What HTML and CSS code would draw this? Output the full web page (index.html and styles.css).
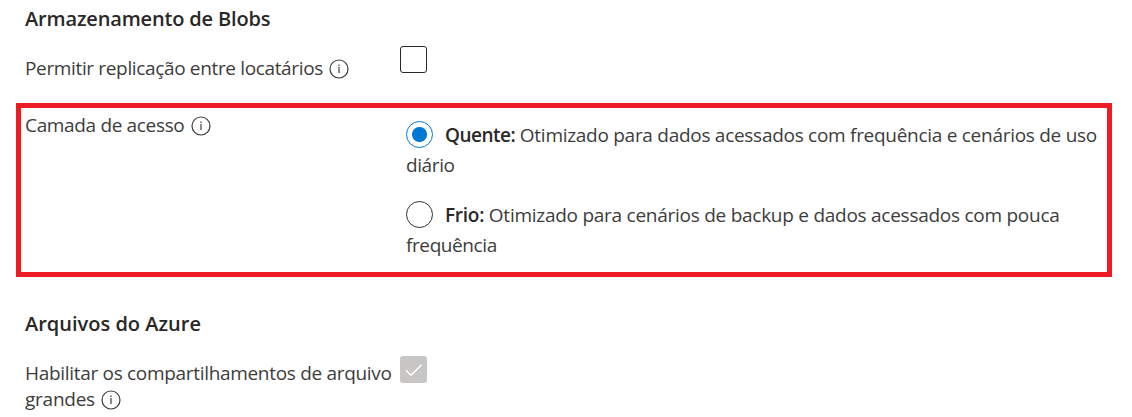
FILE: index.html
```
<!DOCTYPE html>
<html lang="pt-BR">
<head>
<meta charset="utf-8">
<title>Armazenamento</title>
<link rel="stylesheet" href="styles.css">
</head>
<body>
<main class="form">
  <h2 class="title title-blobs">Armazenamento de Blobs</h2>
  <div class="row row-replication">
    <div class="label"><span class="t-replication">Permitir replicação entre locatários</span> <svg class="info" viewBox="0 0 20 20"><circle cx="10" cy="10" r="9"/><path d="M10 8v6M10 5.400v1.500"/></svg></div>
    <span class="checkbox"></span>
  </div>
  <section class="highlight">
    <div class="label"><span class="t-tier">Camada de acesso</span> <svg class="info" viewBox="0 0 20 20"><circle cx="10" cy="10" r="9"/><path d="M10 8v6M10 5.400v1.500"/></svg></div>
    <div class="options">
      <div class="option"><span class="radio checked"></span><b class="t-hot">Quente:</b><span class="t-hot-text"> Otimizado para dados acessados com frequência e cenários de uso</span><br><span class="t-wrap">diário</span></div>
      <div class="option"><span class="radio"></span><b class="t-cool">Frio:</b><span class="t-cool-text"> Otimizado para cenários de backup e dados acessados com pouca</span><br><span class="t-wrap">frequência</span></div>
    </div>
  </section>
  <h2 class="title title-files">Arquivos do Azure</h2>
  <div class="row row-shares">
    <div class="label"><span class="t-shares">Habilitar os compartilhamentos de arquivo</span><br><span class="t-large">grandes</span> <svg class="info" viewBox="0 0 20 20"><circle cx="10" cy="10" r="9"/><path d="M10 8v6M10 5.400v1.500"/></svg></div>
    <span class="checkbox disabled"><svg viewBox="0 0 27 27"><path d="M6 14.200l5 5L21.500 8.700"/></svg></span>
  </div>
</main>
</body>
</html>
```
FILE: styles.css
```
* { box-sizing: border-box; }
body { margin: 0; background: #fff; color: #3d3c3b; font: 19px/26px "Open Sans", "Noto Sans", sans-serif; white-space: nowrap; overflow: hidden; }
.form { display: flex; flex-direction: column; height: 417px; padding: 6px 20px 0 16px; }
.title { margin: 0; padding-left: 9px; color: #292827; font-size: 20px; line-height: 26px; font-weight: 600; }
.title-blobs { letter-spacing: -0.16px; }
.row { display: flex; padding-left: 9px; }
.label { width: 375px; flex: none; }
.info { width: 20px; height: 20px; margin-left: 1.5px; vertical-align: -4px; fill: none; stroke: #3d3c3b; stroke-width: 1.2; }
.t-replication { letter-spacing: -0.35px; }
.t-tier { letter-spacing: -0.34px; }
.t-hot { letter-spacing: -0.5px; }
.t-hot-text { letter-spacing: -0.28px; }
.t-cool { letter-spacing: -0.25px; }
.t-cool-text { letter-spacing: -0.26px; }
.t-shares { letter-spacing: -0.31px; }
.t-large { letter-spacing: -0.25px; }
.t-wrap { letter-spacing: -0.4px; }
.row-replication { height: 71px; padding-top: 14px; }
.row-replication .label { padding-top: 9px; }
.checkbox { width: 27px; height: 27px; border: 1px solid #292827; border-radius: 3px; }
.checkbox.disabled { border: 0; background: #c8c6c4; }
.checkbox svg { display: block; fill: none; stroke: #fff; stroke-width: 1.6; }
.highlight { display: flex; width: 1096px; height: 174px; border: 5px solid #ed1c24; padding: 4px 0 0 4px; }
.highlight .label { width: 381px; }
.options { padding-top: 8px; line-height: 30px; }
.option { height: 80px; }
.option b { color: #292827; font-weight: 600; }
.radio { display: inline-block; width: 27px; height: 27px; margin-right: 12px; border: 1px solid #323130; border-radius: 50%; vertical-align: -6px; }
.checked { border-color: #0078d4; background: radial-gradient(circle, #0078d4 7px, #fff 8px); }
.title-files { padding-top: 34px; }
.row-shares { padding-top: 19px; }
.row-shares .label { padding-top: 4px; }
```
